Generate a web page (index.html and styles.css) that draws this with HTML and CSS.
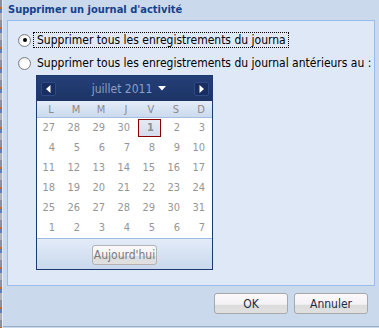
FILE: index.html
```html
<!DOCTYPE html>
<html lang="fr">
<head>
<meta charset="utf-8">
<title>Supprimer un journal d'activité</title>
<link rel="stylesheet" href="styles.css">
</head>
<body>
<div class="edge"></div>
<div class="win">
  <div class="title">Supprimer un journal d'activité</div>
  <div class="panel">
    <label class="opt first">
      <span class="radio checked"></span>
      <span class="focus">Supprimer tous les enregistrements du journa</span>
    </label>
    <label class="opt second">
      <span class="radio"></span>
      <span class="lbl">Supprimer tous les enregistrements du journal antérieurs au :</span>
    </label>
    <div class="cal">
      <div class="cal-head">
        <span class="nav"><svg width="5" height="8" viewBox="0 0 5 8"><path d="M4.5 0 L0 4 L4.5 8 Z" fill="#fff"/></svg></span>
        <span class="month">juillet 2011 <svg class="caret" width="8" height="5" viewBox="0 0 8 5"><path d="M0 0 H8 L4 4.5 Z" fill="#fff"/></svg></span>
        <span class="nav"><svg width="5" height="8" viewBox="0 0 5 8"><path d="M0.5 0 L5 4 L0.5 8 Z" fill="#fff"/></svg></span>
      </div>
      <div class="days">
        <span>L</span><span>M</span><span>M</span><span>J</span><span>V</span><span>S</span><span>D</span>
      </div>
      <div class="grid">
        <span>27</span><span>28</span><span>29</span><span>30</span><span class="today">1</span><span>2</span><span>3</span>
        <span>4</span><span>5</span><span>6</span><span>7</span><span>8</span><span>9</span><span>10</span>
        <span>11</span><span>12</span><span>13</span><span>14</span><span>15</span><span>16</span><span>17</span>
        <span>18</span><span>19</span><span>20</span><span>21</span><span>22</span><span>23</span><span>24</span>
        <span>25</span><span>26</span><span>27</span><span>28</span><span>29</span><span>30</span><span>31</span>
        <span>1</span><span>2</span><span>3</span><span>4</span><span>5</span><span>6</span><span>7</span>
      </div>
      <div class="cal-foot">
        <span class="btn today-btn">Aujourd'hui</span>
      </div>
    </div>
  </div>
  <div class="actions">
    <span class="btn main">OK</span>
    <span class="btn main">Annuler</span>
  </div>
</div>
</body>
</html>
```
FILE: styles.css
```css
html, body {
  margin: 0;
  padding: 0;
}
body {
  width: 379px;
  height: 328px;
  overflow: hidden;
  display: flex;
  background: #cbd9ec;
  font-family: "DejaVu Sans Condensed", "DejaVu Sans", sans-serif;
  font-size: 12px;
  color: #000;
}
.edge {
  width: 2px;
  flex: none;
  background: repeating-linear-gradient(180deg, #8c8fa0 0 7px, #c56a2a 7px 9px, #5e7fb9 9px 13px, #b0b0b8 13px 20px);
  border-right: 1px solid #e3ebf6;
}
.win {
  flex: 1;
  display: flex;
  flex-direction: column;
  border-bottom: 1px solid #9aaecb;
  height: 326px;
  box-sizing: content-box;
}
.title {
  height: 20px;
  line-height: 20px;
  padding-left: 5px;
  font-weight: bold;
  color: #15428b;
  font-size: 11px;
}
.panel {
  margin: 0 4px 0 4px;
  height: 253px;
  border: 1px solid #99bbe8;
  background: #dfe8f6;
  display: flex;
  flex-direction: column;
  padding: 11px 0 0 10px;
  box-sizing: content-box;
}
.opt {
  display: flex;
  align-items: center;
  height: 16px;
}
.opt.second {
  margin-top: 7px;
}
.radio {
  width: 11px;
  height: 11px;
  border: 1px solid #808080;
  border-radius: 50%;
  background: radial-gradient(circle at 60% 60%, #ffffff 40%, #dcdcdc 100%);
  display: flex;
  align-items: center;
  justify-content: center;
  flex: none;
}
.radio.checked::after {
  content: "";
  width: 4px;
  height: 4px;
  border-radius: 50%;
  background: #000;
}
.focus {
  margin-left: 2px;
  padding: 0 2px 0 3px;
  border: 1px dotted #000;
  line-height: 14px;
}
.lbl {
  margin-left: 6px;
  line-height: 14px;
  white-space: nowrap;
}
.cal {
  margin: 4px 0 0 18px;
  width: 175px;
  border: 1px solid #1d3a6f;
  background: #fff;
  display: flex;
  flex-direction: column;
}
.cal-head {
  height: 25px;
  background: linear-gradient(#253f78, #1c3465);
  display: flex;
  align-items: center;
  justify-content: space-between;
  padding: 0 3px 0 4px;
}
.nav {
  width: 13px;
  height: 12px;
  border: 1px solid #2d4a85;
  border-radius: 2px;
  background: #182d60;
  display: flex;
  align-items: center;
  justify-content: center;
}
.month {
  color: #8e9fc2;
  font-size: 12px;
  display: flex;
  align-items: center;
  gap: 6px;
  margin-left: 8px;
}
.caret {
  display: block;
}
.days {
  height: 16px;
  display: grid;
  grid-template-columns: repeat(7, 25px);
  background: linear-gradient(#e4ecf8, #ccdaee);
  border-bottom: 1px solid #a4bee3;
  color: #8a8a8a;
  font-size: 11px;
  align-items: center;
}
.days span {
  text-align: center;
  padding-left: 3px;
}
.grid {
  display: grid;
  grid-template-columns: repeat(7, 25px);
  grid-auto-rows: 20px;
  color: #969696;
  font-size: 11px;
}
.grid span {
  text-align: right;
  padding-right: 7px;
  line-height: 20px;
}
.grid .today {
  margin: 1px 1px 1px 1px;
  border: 1px solid #8b0000;
  background: linear-gradient(#e4ebf5, #d3ddec);
  line-height: 16px;
  padding-right: 6px;
  font-weight: bold;
  color: #8f8f8f;
}
.cal-foot {
  height: 30px;
  border-top: 1px solid #9dbbe4;
  background: linear-gradient(#e3ebf7, #cad9ee);
  display: flex;
  justify-content: center;
  align-items: center;
}
.btn {
  display: flex;
  align-items: center;
  justify-content: center;
  border: 1px solid #b3b3b3;
  border-radius: 3px;
  background: linear-gradient(#fbf9fb 0, #f3f1f4 55%, #dcdcdc 56%, #e0e0e0 100%);
  box-sizing: border-box;
}
.today-btn {
  width: 65px;
  height: 20px;
  color: #7a7a7a;
  font-size: 12px;
  margin-top: 1px;
}
.actions {
  display: flex;
  justify-content: flex-end;
  gap: 6px;
  padding: 7px 11px 0 0;
}
.main {
  width: 74px;
  height: 21px;
  color: #1f2b46;
  font-size: 12px;
  border-color: #a8a8a8;
}
```
